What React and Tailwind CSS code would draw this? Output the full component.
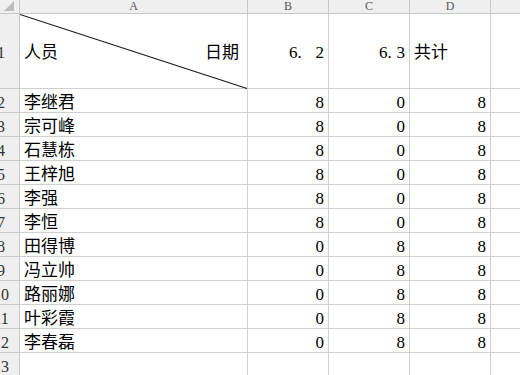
import React from 'react';

const ROWS = [
  ["李继君", 8, 0, 8],
  ["宗可峰", 8, 0, 8],
  ["石慧栋", 8, 0, 8],
  ["王梓旭", 8, 0, 8],
  ["李强", 8, 0, 8],
  ["李恒", 8, 0, 8],
  ["田得博", 0, 8, 8],
  ["冯立帅", 0, 8, 8],
  ["路丽娜", 0, 8, 8],
  ["叶彩霞", 0, 8, 8],
  ["李春磊", 0, 8, 8],
];

const font = { fontFamily: '"Liberation Serif", "Noto Sans CJK SC", serif' };

function RowHead({ n, tall }) {
  return (
    <div className={`relative overflow-hidden bg-[#efefef] border-r border-b border-[#c8c8c8] ${tall ? 'h-[75px]' : 'h-[24px]'}`}>
      <div className="absolute left-[-19px] top-0 bottom-0 w-[40px] flex items-center justify-center pt-[4px] text-[16px] text-[#333]">
        {n}
      </div>
    </div>
  );
}

function ColHead({ label }) {
  return (
    <div className="h-[14px] bg-[#efefef] border-r border-b border-[#c8c8c8] flex justify-center pt-[1px] text-[12px] leading-[10px] text-[#555]">
      {label}
    </div>
  );
}

function Cell({ children, right, tall }) {
  return (
    <div
      className={`border-r border-b border-[#d0d0d0] flex items-center pt-[4px] text-[17px] text-black whitespace-nowrap ${right ? 'justify-end pr-[4px]' : 'justify-start pl-[4px]'} ${tall ? 'h-[75px]' : 'h-[24px]'}`}
    >
      {children}
    </div>
  );
}

export default function App() {
  return (
    <div className="w-[520px] h-[375px] overflow-hidden bg-white" style={font}>
      <div className="grid grid-cols-[20px_228px_81px_81px_81px_1fr]">
        {/* header row */}
        <div className="h-[14px] bg-[#efefef] border-r border-b border-[#c8c8c8] relative">
          <svg className="absolute left-0 top-0" width="19" height="13" viewBox="0 0 19 13">
            <polygon points="14,1 14,11 4,11" fill="#bdbdbd" />
          </svg>
        </div>
        <ColHead label="A" />
        <ColHead label="B" />
        <ColHead label="C" />
        <ColHead label="D" />
        <div className="h-[14px] bg-[#efefef] border-b border-[#c8c8c8]" />

        {/* row 1 */}
        <RowHead n={1} tall />
        <div className="relative h-[75px] border-r border-b border-[#d0d0d0] flex items-center justify-between pt-[4px] px-[4px] text-[17px]">
          <svg className="absolute left-0 top-0" width="228" height="75" viewBox="0 0 228 75">
            <line x1="0" y1="0.5" x2="227" y2="74.5" stroke="#1a1a1a" strokeWidth="1.1" />
          </svg>
          <span className="relative">人员</span>
          <span className="relative pr-[4px]">日期</span>
        </div>
        <Cell right tall>
          <span className="flex"><span>6</span><span className="w-[18px]">.</span><span>2</span></span>
        </Cell>
        <Cell right tall>
          <span className="flex"><span>6</span><span className="w-[9px]">.</span><span>3</span></span>
        </Cell>
        <Cell tall>共计</Cell>
        <div className="h-[75px] border-b border-[#d0d0d0]" />

        {ROWS.map((r, i) => (
          <React.Fragment key={i}>
            <RowHead n={i + 2} />
            <Cell>{r[0]}</Cell>
            <Cell right>{r[1]}</Cell>
            <Cell right>{r[2]}</Cell>
            <Cell right>{r[3]}</Cell>
            <div className="h-[24px] border-b border-[#d0d0d0]" />
          </React.Fragment>
        ))}

        <RowHead n={13} />
        <Cell>{''}</Cell>
        <Cell>{''}</Cell>
        <Cell>{''}</Cell>
        <Cell>{''}</Cell>
        <div className="h-[24px] border-b border-[#d0d0d0]" />
      </div>
    </div>
  );
}
